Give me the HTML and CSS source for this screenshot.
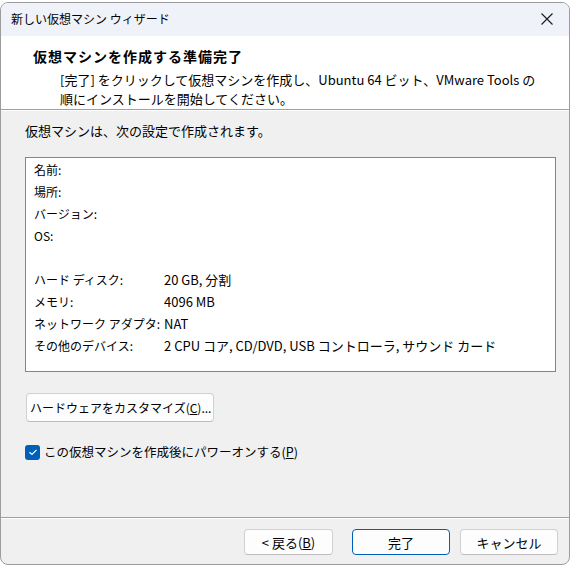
FILE: index.html
```html
<!DOCTYPE html>
<html lang="ja">

<head>
    <meta charset="UTF-8">
    <title>新しい仮想マシン ウィザード</title>
    <link rel="stylesheet" href="styles.css">
</head>

<body>
    <div class="window">
        <div class="titlebar">
            <span class="title">新しい仮想マシン ウィザード</span>
            <span class="close">
                <svg width="12" height="12" viewBox="0 0 12 12">
                    <path d="M0.5 0.5 L11.5 11.5 M11.5 0.5 L0.5 11.5" stroke="#1a1a1a" stroke-width="1.1" fill="none" />
                </svg>
            </span>
        </div>

        <div class="header">
            <h2>仮想マシンを作成する準備完了</h2>
            <p>[完了] をクリックして仮想マシンを作成し、Ubuntu 64 ビット、VMware Tools の<br>順にインストールを開始してください。</p>
        </div>

        <div class="content">
            <p class="intro">仮想マシンは、次の設定で作成されます。</p>

            <div class="summary">
                <table>
                    <tr><td class="key">名前:</td><td></td></tr>
                    <tr><td class="key">場所:</td><td></td></tr>
                    <tr><td class="key">バージョン:</td><td></td></tr>
                    <tr><td class="key">OS:</td><td></td></tr>
                    <tr><td class="key"></td><td></td></tr>
                    <tr><td class="key">ハード ディスク:</td><td>20 GB, 分割</td></tr>
                    <tr><td class="key">メモリ:</td><td>4096 MB</td></tr>
                    <tr><td class="key">ネットワーク アダプタ:</td><td>NAT</td></tr>
                    <tr><td class="key">その他のデバイス:</td><td>2 CPU コア, CD/DVD, USB コントローラ, サウンド カード</td></tr>
                </table>
            </div>

            <button class="btn customize">ハードウェアをカスタマイズ(<u>C</u>)...</button>

            <label class="check">
                <span class="box">
                    <svg width="10" height="10" viewBox="0 0 10 10">
                        <path d="M1.5 5.2 L4 7.5 L8.5 2.8" stroke="#fff" stroke-width="1.2" fill="none" />
                    </svg>
                </span>
                <span>この仮想マシンを作成後にパワーオンする(<u>P</u>)</span>
            </label>
        </div>

        <div class="footer">
            <button class="btn back">&lt;&nbsp;戻る(<u>B</u>)</button>
            <button class="btn finish">完了</button>
            <button class="btn cancel">キャンセル</button>
        </div>
    </div>
</body>

</html>
```

FILE: styles.css
```css
body {
    margin: 0;
    background-color: #fff;
    font-family: "Noto Sans CJK JP", sans-serif;
    font-size: 13px;
    color: #000;
}

.window {
    margin-top: 2px;
    width: 570px;
    height: 563px;
    box-sizing: border-box;
    border: 1px solid #9c9c9c;
    border-radius: 8px;
    overflow: hidden;
    background-color: #f0f0f0;
    display: flex;
    flex-direction: column;
}

/* title bar */
.titlebar {
    height: 33px;
    flex-shrink: 0;
    display: flex;
    align-items: center;
    justify-content: space-between;
    padding: 0 16px 0 10px;
    background-color: #eff3f9;
}

.title {
    font-size: 12px;
    padding-bottom: 2px;
}

.close {
    display: flex;
    margin-top: -1px;
}

/* white header with the page title */
.header {
    height: 74px;
    flex-shrink: 0;
    box-sizing: border-box;
    padding: 11px 0 0 32px;
    background-color: #fff;
    border-bottom: 1px solid #a0a0a0;
}

.header h2 {
    margin: 0;
    font-size: 14px;
    letter-spacing: 1px;
    font-weight: bold;
    line-height: 18px;
}

.header p {
    margin: 5px 0 0 27px;
    line-height: 19px;
}

.content {
    flex: 1;
    border-top: 1px solid #fff;
    padding: 12px 0 0 24px;
}

.intro {
    margin: 0;
    line-height: 16px;
}

.summary {
    margin-top: 18px;
    width: 531px;
    height: 215px;
    box-sizing: border-box;
    border: 1px solid #858585;
    background-color: #fff;
    padding: 0 0 0 8px;
}

.summary table {
    border-collapse: collapse;
    table-layout: fixed;
    width: 520px;
}

.summary td {
    padding: 0;
    height: 22px;
    white-space: nowrap;
}

.summary .key {
    width: 130px;
    font-size: 12px;
}

/* buttons */
.btn {
    font-family: inherit;
    font-size: 13px;
    color: #000;
    background-color: #fdfdfd;
    border: 1px solid #d0d0d0;
    border-bottom-color: #bdbdbd;
    border-radius: 4px;
    padding: 0;
}

.customize {
    display: block;
    margin-top: 21px;
    margin-left: 1px;
    width: 188px;
    height: 29px;
    text-align: left;
    padding-left: 3px;
    font-size: 12px;
    white-space: nowrap;
}

.check {
    display: flex;
    align-items: center;
    gap: 4px;
    margin-top: 22px;
    line-height: 16px;
    font-size: 12.5px;
}

.box {
    width: 15px;
    height: 15px;
    border-radius: 3px;
    background-color: #005fb8;
    display: flex;
    align-items: center;
    justify-content: center;
}

.footer {
    height: 47px;
    flex-shrink: 0;
    box-sizing: border-box;
    border-top: 1px solid #a0a0a0;
    box-shadow: inset 0 1px #fff;
    display: flex;
    align-items: flex-start;
    padding: 11px 11px 0 0;
    justify-content: flex-end;
}

.footer .btn {
    height: 26px;
    width: 98px;
}

.footer .back {
    width: 89px;
    margin-right: 19px;
}

.footer .finish {
    border: 1px solid #005fb8;
    margin-right: 10px;
}
```
